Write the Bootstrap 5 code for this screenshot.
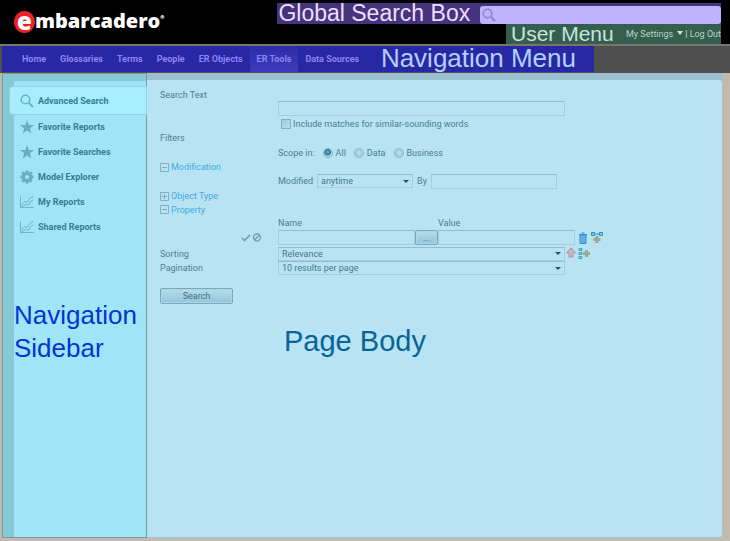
<!DOCTYPE html>
<html lang="en">
<head>
<meta charset="utf-8">
<meta name="viewport" content="width=device-width, initial-scale=1">
<title>Advanced Search</title>
<link href="https://cdn.jsdelivr.net/npm/bootstrap@5.3.0/dist/css/bootstrap.min.css" rel="stylesheet">
<style>
body{background:#c1bab0;font-family:Roboto,"Open Sans",sans-serif;font-size:9px;line-height:12px;color:#4b7d91}
.note{font-family:"Liberation Sans",Arial,sans-serif;font-weight:400;margin:0;white-space:nowrap}
.masthead{background:#000;height:44px}
.brandmark{color:#fff;font-family:"Open Sans",sans-serif;font-weight:800;font-size:20px;line-height:19px;padding:11px 0 0 14px;text-decoration:none}
.brandmark .disc{width:21px;height:22px;border-radius:50%;background:#ec2227;display:flex;align-items:center;justify-content:center;padding-bottom:4px;font-size:24px}
.brandmark sup{font-size:5px;top:-9px}
.tools{width:62%;padding:3px 9px 0 0}
.searchzone{background:#44347c;height:21px;color:#f1dcff;font-size:23px;line-height:21px;padding-left:1px}
.searchfield{background:#bfb3ff;border-radius:3px;height:18px;margin:3px 0 0 10px;padding-left:2px}
.searchfield input{background:none;border:0;outline:0;height:16px;min-width:0;font-size:11px}
.userzone{background:#355e4f;height:20px;width:215px;color:#c5e6dc;padding-left:5px}
.userzone .note{font-size:21px;line-height:20px}
.userzone a,.userzone button{color:#b8d6cb;text-decoration:none;background:none;border:0;padding:0}
.caret{display:inline-block;border:3px solid transparent;border-top:4px solid #cfe9df;border-bottom:0;margin:0 2px 2px 4px}
.menubar{background:#4f4f4f;border-top:2px solid #77766b;height:29px;padding-left:2px}
.menublue{background:#2828a5;width:592px;height:26px;padding-left:13px}
.menublue a{color:#8e83f4;font-weight:700;text-decoration:none;padding:0 7px;line-height:26px;white-space:nowrap}
.menublue a.current{background:linear-gradient(#2d2daa,#3c3cba)}
.menublue .note{color:#b3d0ff;font-size:26px;line-height:24px;margin-left:auto;padding-right:18px}
.stage{padding:0 8px 3px 2px}
.side{width:145px;background:#86c9d6;border:1px solid #7a9ba3;padding:7px 0 0 11px}
.sidein{background:#a0e5f7;border-top-left-radius:3px;padding-top:6px}
.sidein a{height:25px;color:#347f92;font-weight:700;text-decoration:none;padding-left:6px;gap:4px;white-space:nowrap}
.sidein a.current{background:#a6edff;height:27px;margin-left:-4px;padding-left:10px;border-radius:3px 0 0 3px;box-shadow:0 0 0 1px #90d3e3}
.sidein svg{color:#69afc2}
.sidein .note{color:#0433d6;font-size:26px;line-height:33px;margin-top:60px}
.content{background:#9bbfcf;padding-top:7px}
.panel{background:#b8e3f3;border-radius:0 3px 3px 0;border-bottom:1px solid #9cc5d2;padding:8px 0 0 13px}
.rowline{display:flex;align-items:center;white-space:nowrap}
.caption{width:118px;flex:none}
.h12{height:12px}.h13{height:13px}.h14{height:14px}.h15{height:15px}.h16{height:16px}.h17{height:17px}
.panel a{color:#42abe2;text-decoration:none;display:flex;align-items:center;gap:2px}
.panel a svg{color:#7db1c4}
.box,.pick{background:#b8e3f3;border:1px solid #a2cfe0;border-top-color:#8fbdce;border-radius:0;color:#47788c;font-size:9px;line-height:12px;height:15px;padding:0 3px;outline:0;min-width:0}
.pick{appearance:none;height:14px;background:#b8e3f3 url("data:image/svg+xml,%3Csvg xmlns='http://www.w3.org/2000/svg' width='6' height='3'%3E%3Cpath d='M0 0h6L3 3z' fill='%23225366'/%3E%3C/svg%3E") no-repeat right 3px center}
.wide{width:287px}.mid{width:126px}.name{width:137px}.when{width:96px}
.tick{appearance:none;width:10px;height:10px;margin:0 2px 0 3px;border:1px solid #83b1c2;background:linear-gradient(135deg,#9ccadb,#b8dfed)}
.dot{appearance:none;width:10px;height:10px;margin:0 3px 0 0;border:1px solid #88b6c7;border-radius:50%;background:radial-gradient(#b8dfed 20%,#9ecbdc 50%,#b5dbe9 75%)}
.dot:checked{background:radial-gradient(circle at 45% 40%,#4db5e0 10%,#2b6b8c 45%,#a8d4e5 55%)}
.push{border:1px solid #77a9bb;border-radius:2px;background:linear-gradient(#b4dded,#93c5d7);color:#427387;padding:0;line-height:12px;box-shadow:inset 0 0 0 1px #abd7e7}
.more{width:23px}.go{width:73px;margin-top:13px}.namehead{width:160px}
.bare{border:0;background:none;padding:0;display:flex}
.panel .note{color:#066596;font-size:29px;line-height:34px;padding:20px 0 0 124px}
</style>
<script src="https://cdn.jsdelivr.net/npm/bootstrap@5.3.0/dist/js/bootstrap.bundle.min.js" defer></script>
</head>
<body class="d-flex flex-column min-vh-100">
<svg class="d-none" aria-hidden="true">
<symbol id="lens" viewBox="0 0 14 14"><circle cx="5.5" cy="5.5" r="4.3" fill="none" stroke="currentColor" stroke-width="1.5"/><path d="M9 9l4 4" stroke="currentColor" stroke-width="2"/></symbol>
<symbol id="star" viewBox="0 0 14 14"><path d="M7 0l1.800 4.900 5.200.2-4.100 3.200L11.400 13.500 7 10.500 2.600 13.500 4.100 8.300 0 5.100l5.200-.2z" fill="currentColor"/></symbol>
<symbol id="gear" viewBox="0 0 14 14"><circle cx="7" cy="7" r="3.700" fill="none" stroke="currentColor" stroke-width="3.200"/><path d="M7 .4v2M7 11.600v2M.4 7h2M11.600 7h2M2.300 2.300l1.500 1.500M10.200 10.200l1.500 1.500M11.700 2.300l-1.500 1.500M3.800 10.200l-1.500 1.500" stroke="currentColor" stroke-width="2.800"/></symbol>
<symbol id="chart" viewBox="0 0 14 14"><path d="M.5 1.500v11H14M1 10.500l3.500-4 2.500 1 3-4.500 3.500-1.500M1.500 12l4-2.500 3 .5 2.500-4 2.500-1" fill="none" stroke="currentColor" stroke-width=".9"/></symbol>
<symbol id="minus" viewBox="0 0 9 9"><path d="M.5.5h8v8h-8zM2 4.500h5" fill="none" stroke="currentColor"/></symbol>
<symbol id="plus" viewBox="0 0 9 9"><path d="M.5.5h8v8h-8zM2 4.500h5M4.500 2v5" fill="none" stroke="currentColor"/></symbol>
</svg>
<header class="masthead d-flex justify-content-between">
<a href="#" class="brandmark d-flex"><span class="disc">e</span><span>mbarcadero<sup>®</sup></span></a>
<div class="tools d-flex flex-column align-items-end">
<div class="searchzone note d-flex w-100"><label for="gs">Global Search Box</label><div class="searchfield d-flex flex-grow-1 align-items-center"><svg width="14" height="14" color="#8d80c9"><use href="#lens"/></svg><input id="gs" class="flex-grow-1" type="text"></div></div>
<div class="userzone d-flex align-items-center justify-content-between"><h2 class="note">User Menu</h2><div class="text-nowrap"><button type="button">My Settings<span class="caret"></span></button>| <a href="#">Log Out</a></div></div>
</div>
</header>
<nav class="menubar"><div class="menublue d-flex"><a href="#">Home</a><a href="#">Glossaries</a><a href="#">Terms</a><a href="#">People</a><a href="#">ER Objects</a><a href="#" class="current">ER Tools</a><a href="#">Data Sources</a><h2 class="note">Navigation Menu</h2></div></nav>
<div class="stage d-flex flex-grow-1">
<aside class="side d-flex flex-column flex-shrink-0"><div class="sidein flex-grow-1">
<nav>
<a href="#" class="current d-flex align-items-center"><svg width="14" height="14"><use href="#lens"/></svg>Advanced Search</a>
<a href="#" class="d-flex align-items-center"><svg width="14" height="14"><use href="#star"/></svg>Favorite Reports</a>
<a href="#" class="d-flex align-items-center"><svg width="14" height="14"><use href="#star"/></svg>Favorite Searches</a>
<a href="#" class="d-flex align-items-center"><svg width="14" height="14"><use href="#gear"/></svg>Model Explorer</a>
<a href="#" class="d-flex align-items-center"><svg width="14" height="14"><use href="#chart"/></svg>My Reports</a>
<a href="#" class="d-flex align-items-center"><svg width="14" height="14"><use href="#chart"/></svg>Shared Reports</a>
</nav>
<h2 class="note">Navigation<br>Sidebar</h2>
</div></aside>
<main class="content d-flex flex-column flex-grow-1"><form class="panel flex-grow-1">
<div class="rowline h13"><label for="q">Search Text</label></div>
<div class="rowline h15"><span class="caption"></span><input id="q" class="box wide" type="text"></div>
<div class="rowline h15"><span class="caption"></span><input id="snd" class="tick" type="checkbox"><label for="snd">Include matches for similar-sounding words</label></div>
<div class="rowline h14">Filters</div>
<div class="rowline h16"><span class="caption"></span><span class="me-2">Scope in:</span><input class="dot" type="radio" name="s" id="s1" checked><label for="s1" class="me-2">All</label><input class="dot" type="radio" name="s" id="s2"><label for="s2" class="me-2">Data</label><input class="dot" type="radio" name="s" id="s3"><label for="s3">Business</label></div>
<div class="rowline h12"><a href="#"><svg width="9" height="9"><use href="#minus"/></svg>Modification</a></div>
<div class="rowline h16"><span class="caption"></span><label for="when" class="me-1">Modified</label><select id="when" class="pick when"><option>anytime</option></select><label for="by" class="mx-1">By</label><input id="by" class="box mid" type="text"></div>
<div class="rowline h14"><a href="#"><svg width="9" height="9"><use href="#plus"/></svg>Object Type</a></div>
<div class="rowline h13"><a href="#"><svg width="9" height="9"><use href="#minus"/></svg>Property</a></div>
<div class="rowline h13"><span class="caption"></span><label for="pn" class="namehead">Name</label><label for="pv">Value</label></div>
<div class="rowline h17"><span class="caption d-flex justify-content-end pe-3"><svg width="21" height="9" viewBox="0 0 21 9" fill="none" stroke="#6f9fb0"><path d="M1 5l2.500 2.500L9 2" stroke-width="1.700"/><circle cx="16" cy="4.500" r="3.500" stroke-width="1.300"/><path d="M13.500 7l5-5" stroke-width="1.300"/></svg></span><input id="pn" class="box name" type="text"><button type="button" class="push h15 more">...</button><input id="pv" class="box name" type="text"><button type="button" class="bare ms-1" aria-label="Delete"><svg width="8" height="12" viewBox="0 0 8 12"><path d="M1 3h6v8.500H1z" fill="#78b9e8" stroke="#328bc9"/><path d="M0 2.500h8M2.500 1h3" stroke="#328bc9"/><path d="M3 4v7M5 4v7" stroke="#4a9ad4" stroke-width=".7"/></svg></button><button type="button" class="bare ms-1" aria-label="Add condition"><svg width="12" height="12" viewBox="0 0 12 12"><path d="M3 2h6" stroke="#388fb5"/><path d="M.5.5h3v3h-3zM8.500.5h3v3h-3z" fill="#83cde9" stroke="#388fb5"/><path d="M6 4v7M2.500 7.500h7" stroke="#98ac93" stroke-width="3"/></svg></button></div>
<div class="rowline h15"><label class="caption" for="so">Sorting</label><select id="so" class="pick wide"><option>Relevance</option></select><button type="button" class="bare" aria-label="Ascending"><svg width="12" height="14" viewBox="0 0 12 14"><path d="M6 1l4.500 5H8v4H4V6H1.500z" fill="#c5b9bf" stroke="#b08f97"/></svg></button><button type="button" class="bare" aria-label="Add sorting"><svg width="14" height="14" viewBox="0 0 14 14"><path d="M2 1.500h3v2H2zM2 5.500h3v2H2zM2 9.500h3v2H2z" fill="#8dd8df" stroke="#37aab9"/><path d="M9.500 3v7M6 6.500h7" stroke="#98ac93" stroke-width="3"/></svg></button></div>
<div class="rowline h14"><label class="caption" for="pg">Pagination</label><select id="pg" class="pick wide"><option>10 results per page</option></select></div>
<button type="submit" class="push h16 go">Search</button>
<h2 class="note">Page Body</h2>
</form></main>
</div>
</body>
</html>
